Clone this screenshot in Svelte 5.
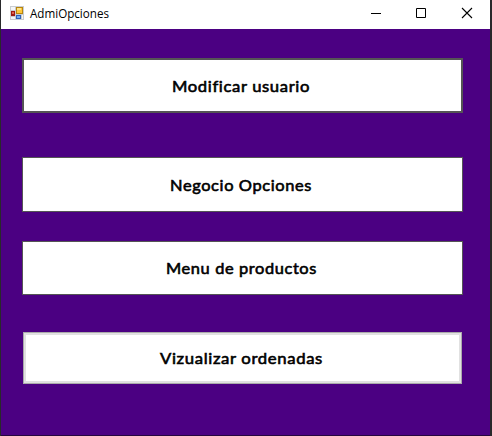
<script>
  const options = [
    { label: 'Modificar usuario', kind: 'focused', width: 138, gap: 29 },
    { label: 'Negocio Opciones', kind: 'plain', width: 142, gap: 44 },
    { label: 'Menu de productos', kind: 'plain short', width: 151, gap: 29 },
    { label: 'Vizualizar ordenadas', kind: 'raised', width: 163, gap: 37 }
  ];
</script>

<div class="desktop">
  <div class="window">
    <header>
      <svg class="app" width="14" height="14" viewBox="0 0 14 14" shape-rendering="crispEdges">
        <path fill="#c9ccd0" d="M0 0h14v14H0z" />
        <path fill="#f4f6f8" d="M1 1h4v3H1zM1 11h4v2H1zM12 9h1v4h-1z" />
        <path fill="#b8860f" d="M6 1h7v7H6z" />
        <path fill="#ffc83a" d="M7 2h5v5H7z" />
        <path fill="#ffe48a" d="M7 2h4v2H7z" />
        <path fill="#9c1c14" d="M1 5h4v5H1z" />
        <path fill="#e2604c" d="M2 6h2v2H2z" />
        <path fill="#2d62b8" d="M6 9h5v4H6z" />
        <path fill="#72aaf0" d="M7 10h3v2H7z" />
      </svg>
      <svg class="title" width="82" height="20"><text x="0" y="14" textLength="79" lengthAdjust="spacingAndGlyphs">AdmiOpciones</text></svg>
      <nav>
        <svg width="46" height="29"><path d="M19 13.5h10" /></svg>
        <svg width="46" height="29"><path d="M18.5 8.5h9v9h-9z" /></svg>
        <svg width="46" height="29" class="close"><path d="M18 8l10 10M28 8l-10 10" /></svg>
      </nav>
    </header>
    <main>
      {#each options as o}
        <button class={o.kind} style="margin-top: {o.gap}px">
          <svg width={o.width} height="24"><text x="0" y="18" textLength={o.width} lengthAdjust="spacingAndGlyphs">{o.label}</text></svg>
        </button>
      {/each}
    </main>
  </div>
</div>

<style>
  :global(body) { margin: 0; overflow: hidden; }
  .desktop {
    box-sizing: border-box;
    width: 492px;
    height: 436px;
    padding: 0 2px 0 1px;
    background: #29292b;
  }
  .window {
    box-sizing: border-box;
    height: 436px;
    background: #4b0082;
    border-bottom: 1px solid #26053f;
  }
  header {
    display: flex;
    height: 29px;
    background: #fff;
  }
  .app { margin: 6px 0 0 9px; }
  .title { margin: 4px 0 0 6px; overflow: visible; }
  .title text { font: 12px "Open Sans", sans-serif; fill: #000; }
  nav { display: flex; margin-left: auto; }
  nav path { fill: none; stroke: #000; stroke-width: 1; }
  .close path { stroke-width: 1.1; }
  main { display: flex; flex-direction: column; padding-left: 21px; }
  button {
    display: flex;
    align-items: center;
    justify-content: center;
    box-sizing: border-box;
    width: 441px;
    height: 55px;
    padding: 0 3px 0 0;
    background: #fff;
    border: 1px solid #555;
    border-radius: 0;
  }
  button svg { overflow: visible; }
  button text {
    font: 16px Lato, sans-serif;
    font-variant-ligatures: none;
    letter-spacing: 0.6px;
    fill: #000;
    stroke: #000;
    stroke-width: 0.6px;
  }
  .focused { border-width: 2px; }
  .short { height: 54px; }
  .raised {
    width: 439px;
    height: 52px;
    margin-left: 1px;
    border-color: #aaa;
    box-shadow: inset 0 0 0 2px #e1e1e1;
  }
</style>
